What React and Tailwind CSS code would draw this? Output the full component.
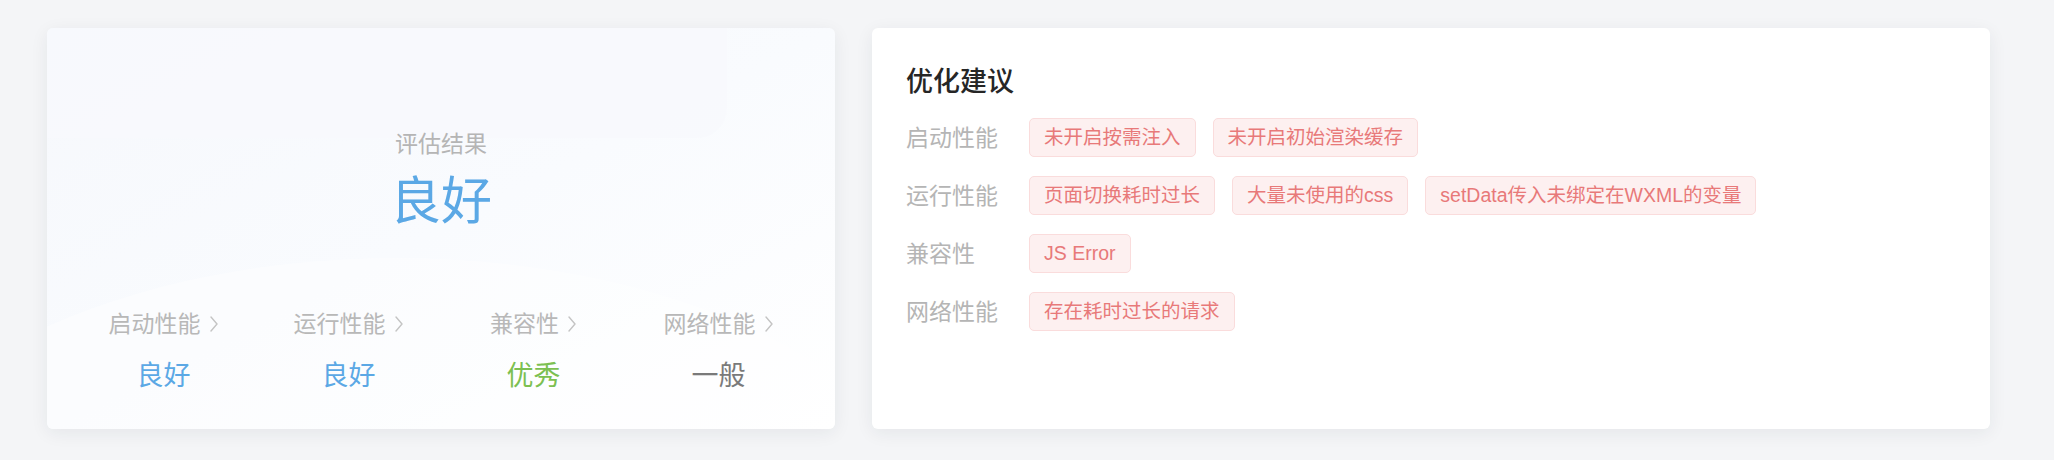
import React from "react";

const FONT = { fontFamily: '"Liberation Sans", "Noto Sans CJK SC", sans-serif' };

const scores = [
  { name: "启动性能", value: "良好", color: "text-[#5ba8e5]" },
  { name: "运行性能", value: "良好", color: "text-[#5ba8e5]" },
  { name: "兼容性", value: "优秀", color: "text-[#7cc051]" },
  { name: "网络性能", value: "一般", color: "text-[#7a7a7a]" },
];

const suggestions = [
  { name: "启动性能", tags: ["未开启按需注入", "未开启初始渲染缓存"] },
  { name: "运行性能", tags: ["页面切换耗时过长", "大量未使用的css", "setData传入未绑定在WXML的变量"] },
  { name: "兼容性", tags: ["JS Error"] },
  { name: "网络性能", tags: ["存在耗时过长的请求"] },
];

function Chevron() {
  return (
    <svg width="10" height="18" viewBox="0 0 10 18" className="ml-[8px] shrink-0" fill="none">
      <polyline points="2,2 8,9 2,16" stroke="#c4c4c4" strokeWidth="1.4" strokeLinecap="round" strokeLinejoin="round" />
    </svg>
  );
}

function ResultCard() {
  return (
    <div className="relative w-[788px] h-[401px] shrink-0 overflow-hidden rounded-[6px] bg-gradient-to-br from-[#f6f8fc] via-[#f9fbfe] to-white shadow-[0_4px_18px_rgba(30,40,60,0.07)]">
      {/* faint decorative shapes */}
      <div className="absolute left-0 top-0 w-[680px] h-[110px] rounded-br-[30px] bg-[#f7f9fd]/80" />
      <div className="absolute -left-[200px] top-[230px] w-[1100px] h-[600px] rounded-[50%] bg-white/40" />

      <div className="relative flex flex-col items-center pt-[100px]">
        <div className="text-[23px] leading-[32px] text-[#b5b5b5]">评估结果</div>
        <div className="mt-[12px] text-[51px] leading-[60px] text-[#5ba8e5]">良好</div>

        <div className="mt-[76px] grid grid-cols-4 w-full px-[24px]">
          {scores.map((s) => (
            <div key={s.name} className="flex flex-col items-center">
              <div className="flex items-center text-[23px] leading-[32px] text-[#b8b8b8]">
                {s.name}
                <Chevron />
              </div>
              <div className={`mt-[18px] text-[27px] leading-[36px] ${s.color}`}>{s.value}</div>
            </div>
          ))}
        </div>
      </div>
    </div>
  );
}

function SuggestionCard() {
  return (
    <div className="flex-1 h-[401px] rounded-[6px] bg-white shadow-[0_4px_18px_rgba(30,40,60,0.07)] pt-[36px] pl-[34px]">
      <h2 className="text-[27px] leading-[36px] font-medium text-[#262626]">优化建议</h2>
      <div className="mt-[18px] flex flex-col gap-[19px]">
        {suggestions.map((row) => (
          <div key={row.name} className="flex items-center">
            <div className="w-[123px] shrink-0 text-[23px] leading-[32px] text-[#b5b5b5]">{row.name}</div>
            <div className="flex gap-[17px]">
              {row.tags.map((t) => (
                <span
                  key={t}
                  className="h-[39px] flex items-center px-[14px] rounded-[5px] border border-[#fadcdc] bg-[#fdf0f0] text-[19.5px] text-[#e87979]"
                >
                  {t}
                </span>
              ))}
            </div>
          </div>
        ))}
      </div>
    </div>
  );
}

export default function App() {
  return (
    <div style={FONT} className="w-[2054px] h-[460px] bg-[#f4f5f7] pt-[28px] pl-[47px] pr-[64px]">
      <div className="flex gap-[37px]">
        <ResultCard />
        <SuggestionCard />
      </div>
    </div>
  );
}
